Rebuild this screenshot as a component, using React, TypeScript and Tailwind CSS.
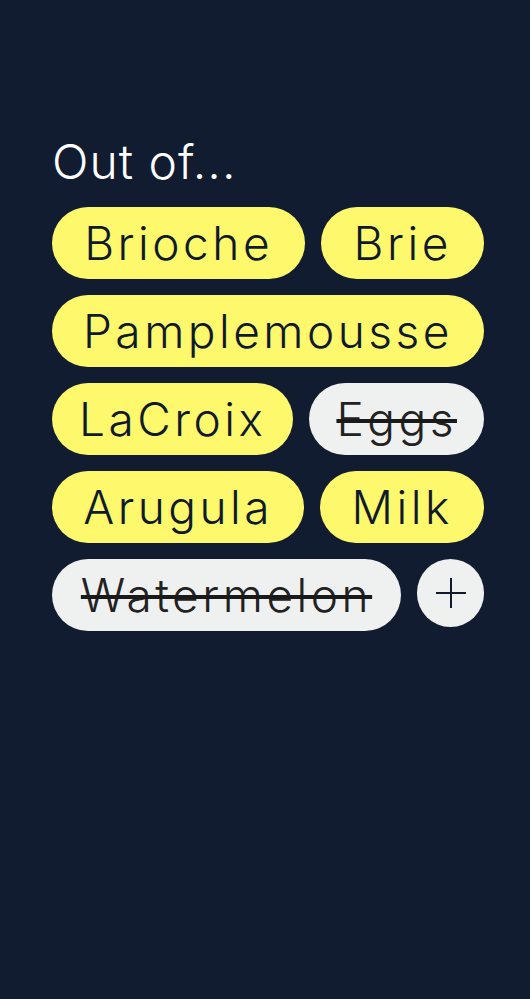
import React, { useState } from 'react';

interface Item {
  id: number;
  name: string;
  done: boolean;
}

const initialItems: Item[] = [
  { id: 1, name: 'Brioche', done: false },
  { id: 2, name: 'Brie', done: false },
  { id: 3, name: 'Pamplemousse', done: false },
  { id: 4, name: 'LaCroix', done: false },
  { id: 5, name: 'Eggs', done: true },
  { id: 6, name: 'Arugula', done: false },
  { id: 7, name: 'Milk', done: false },
  { id: 8, name: 'Watermelon', done: true },
];

export default function App() {
  const [items, setItems] = useState<Item[]>(initialItems);

  const toggle = (id: number) => {
    setItems(prev => prev.map(i => (i.id === id ? { ...i, done: !i.done } : i)));
  };

  return (
    <div className="min-h-screen bg-[#111c30] pt-[138px] pl-[52px] pr-[46px] font-['Inter',sans-serif]">
      <h1 className="text-[48px] leading-none font-[350] text-white tracking-[1px]">Out of...</h1>

      {/* Chips */}
      <div className="mt-[21px] flex flex-wrap gap-4">
        {items.map(item => (
          <button
            key={item.id}
            onClick={() => toggle(item.id)}
            className={`grow h-[72px] px-[22px] rounded-full flex items-center justify-center text-[46px] leading-none font-[350] tracking-[3.5px] ${
              item.done
                ? 'bg-[#eff0f0] text-[#222222] line-through decoration-[4px] decoration-[#1a1a1a]'
                : 'bg-[#fef86c] text-[#0f1a2e]'
            }`}
          >
            {item.name}
          </button>
        ))}
        <button className="w-[67px] h-[68px] rounded-full bg-[#eff0f0] flex items-center justify-center text-[#0f1a2e]">
          <svg width="30" height="30" viewBox="0 0 30 30" fill="none" stroke="currentColor" strokeWidth="2">
            <path d="M15 0v30M0 15h30" />
          </svg>
        </button>
      </div>
    </div>
  );
}
